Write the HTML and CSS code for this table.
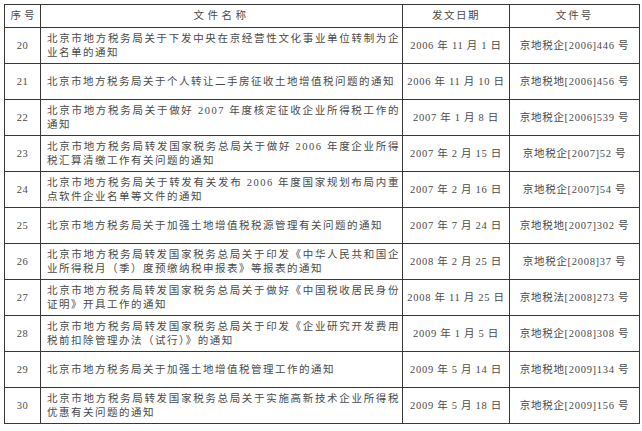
FILE: index.html
```html
<!DOCTYPE html>
<html lang="zh-CN">
<head>
<meta charset="utf-8">
<title>文件列表</title>
<link rel="stylesheet" href="styles.css">
</head>
<body>
<div class="page">
<table class="docs">
  <colgroup>
    <col class="c-no">
    <col class="c-title">
    <col class="c-date">
    <col class="c-code">
  </colgroup>
  <thead>
    <tr>
      <th class="h-no">序号</th>
      <th class="h-title">文件名称</th>
      <th class="h-date">发文日期</th>
      <th class="h-code">文件号</th>
    </tr>
  </thead>
  <tbody>
    <tr><td class="no">20</td><td class="title">北京市地方税务局关于下发中央在京经营性文化事业单位转制为企业名单的通知</td><td class="date">2006 年 11 月 1 日</td><td class="code">京地税企[2006]446 号</td></tr>
    <tr><td class="no">21</td><td class="title">北京市地方税务局关于个人转让二手房征收土地增值税问题的通知</td><td class="date">2006 年 11 月 10 日</td><td class="code">京地税地[2006]456 号</td></tr>
    <tr><td class="no">22</td><td class="title">北京市地方税务局关于做好 2007 年度核定征收企业所得税工作的通知</td><td class="date">2007 年 1 月 8 日</td><td class="code">京地税企[2006]539 号</td></tr>
    <tr><td class="no">23</td><td class="title">北京市地方税务局转发国家税务总局关于做好 2006 年度企业所得税汇算清缴工作有关问题的通知</td><td class="date">2007 年 2 月 15 日</td><td class="code">京地税企[2007]52 号</td></tr>
    <tr><td class="no">24</td><td class="title">北京市地方税务局关于转发有关发布 2006 年度国家规划布局内重点软件企业名单等文件的通知</td><td class="date">2007 年 2 月 16 日</td><td class="code">京地税企[2007]54 号</td></tr>
    <tr><td class="no">25</td><td class="title">北京市地方税务局关于加强土地增值税税源管理有关问题的通知</td><td class="date">2007 年 7 月 24 日</td><td class="code">京地税地[2007]302 号</td></tr>
    <tr><td class="no">26</td><td class="title">北京市地方税务局转发国家税务总局关于印发《中华人民共和国企业所得税月（季）度预缴纳税申报表》等报表的通知</td><td class="date">2008 年 2 月 25 日</td><td class="code">京地税企[2008]37 号</td></tr>
    <tr><td class="no">27</td><td class="title">北京市地方税务局转发国家税务总局关于做好《中国税收居民身份证明》开具工作的通知</td><td class="date">2008 年 11 月 25 日</td><td class="code">京地税法[2008]273 号</td></tr>
    <tr><td class="no">28</td><td class="title">北京市地方税务局转发国家税务总局关于印发《企业研究开发费用税前扣除管理办法（试行）》的通知</td><td class="date">2009 年 1 月 5 日</td><td class="code">京地税企[2008]308 号</td></tr>
    <tr><td class="no">29</td><td class="title">北京市地方税务局关于加强土地增值税管理工作的通知</td><td class="date">2009 年 5 月 14 日</td><td class="code">京地税地[2009]134 号</td></tr>
    <tr><td class="no">30</td><td class="title">北京市地方税务局转发国家税务总局关于实施高新技术企业所得税优惠有关问题的通知</td><td class="date">2009 年 5 月 18 日</td><td class="code">京地税企[2009]156 号</td></tr>
  </tbody>
</table>
</div>
</body>
</html>
```

FILE: styles.css
```css
html, body {
  margin: 0;
  padding: 0;
  background: #ffffff;
}

.page {
  padding: 4px 0 0 4px;
}

.docs {
  border-collapse: collapse;
  table-layout: fixed;
  width: 635px;
  font-family: "Liberation Serif", "Noto Sans CJK SC", serif;
  font-size: 10.5px;
  line-height: 13.5px;
  color: #4a4a4a;
}

.c-no { width: 36px; }
.c-title { width: 362px; }
.c-date { width: 107px; }
.c-code { width: 130px; }

.docs th,
.docs td {
  border: 1px solid #383838;
  padding: 0;
  vertical-align: middle;
  font-weight: normal;
}

.docs thead tr { height: 23px; }
.docs tbody tr { height: 36px; }

.docs th { text-align: center; }
.docs .h-no { letter-spacing: 3px; text-indent: 3px; }
.docs .h-title { letter-spacing: 3.5px; }
.docs .h-date { letter-spacing: 1.5px; }
.docs .h-code { letter-spacing: 2px; }

.docs .no {
  text-align: center;
  letter-spacing: 0.5px;
}

.docs .title {
  padding: 0 2px 0 6px;
  text-align: justify;
  letter-spacing: 1.5px;
}

.docs .date {
  text-align: center;
  letter-spacing: 0.7px;
}

.docs .code {
  text-align: center;
  letter-spacing: 0.7px;
}
```
